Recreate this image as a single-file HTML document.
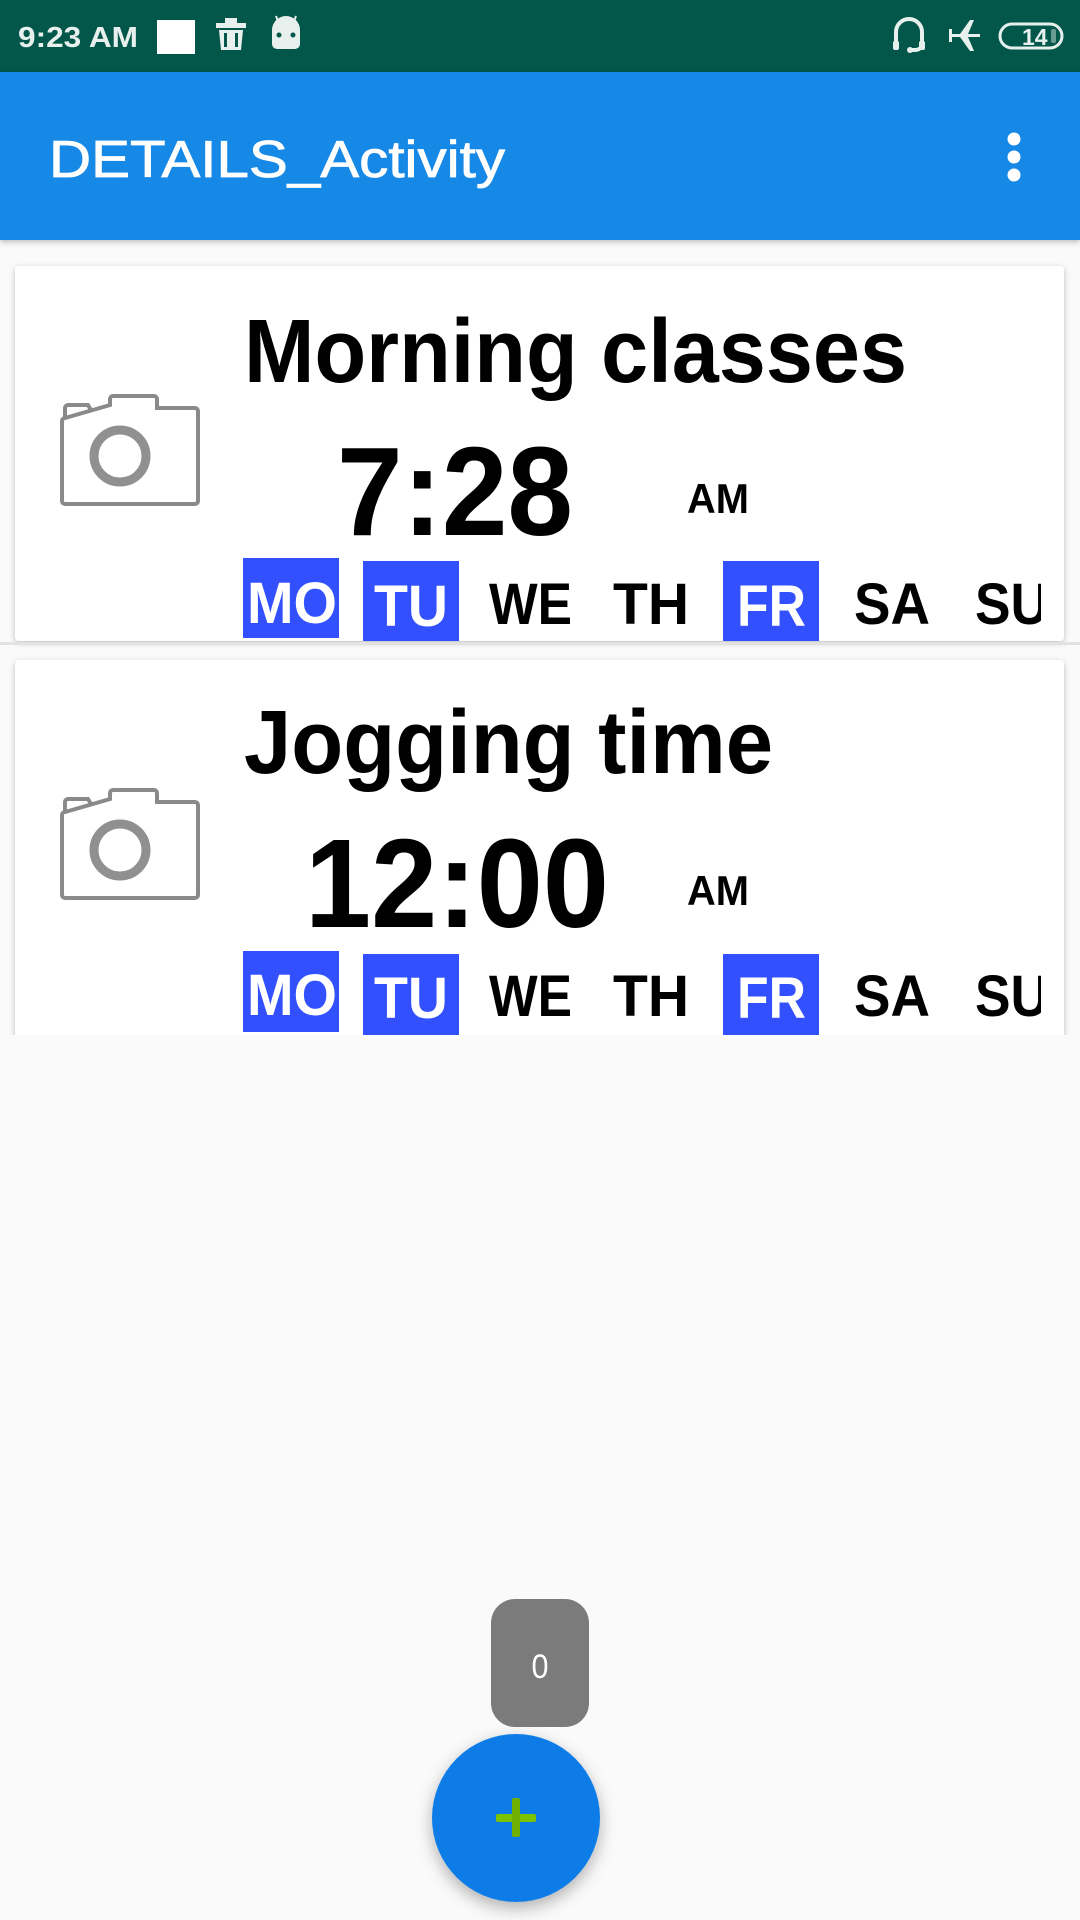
<!DOCTYPE html>
<html><head><meta charset="utf-8"><style>
html,body{margin:0;padding:0;background:#fafafa;width:1080px;height:1920px;overflow:hidden}
svg{display:block}
text{font-family:"Liberation Sans",Arial,sans-serif}
</style></head><body>
<svg width="1080" height="1920" viewBox="0 0 1080 1920" xmlns="http://www.w3.org/2000/svg">
<defs>
<filter id="sh" x="-10%" y="-10%" width="120%" height="130%"><feDropShadow dx="0" dy="2" stdDeviation="3" flood-color="#000" flood-opacity="0.25"/></filter>
<filter id="fsh" x="-30%" y="-30%" width="160%" height="170%"><feDropShadow dx="0" dy="6" stdDeviation="8" flood-color="#000" flood-opacity="0.3"/></filter>
<g id="cam" fill="none" stroke="#8a8a8a" stroke-width="4">
<path d="M62 0 h40 a3 3 0 0 1 3 3 v9 h38 a3 3 0 0 1 3 3 v90 a3 3 0 0 1 -3 3 h-130 a3 3 0 0 1 -3 -3 v-80 a3 3 0 0 1 3 -3 l45 -13 v-6 a3 3 0 0 1 3 -3z"/>
<path d="M13 22 v-10 a3 3 0 0 1 3 -3 h20 l3 5"/>
<circle cx="68" cy="60" r="26" stroke-width="9" stroke="#909090"/>
</g>
</defs>
<rect width="1080" height="1920" fill="#fafafa"/>
<!-- status bar -->
<rect width="1080" height="72" fill="#02574a"/>
<text x="18" y="47" font-size="29" font-weight="bold" fill="#e8f0ee" textLength="120" lengthAdjust="spacingAndGlyphs">9:23 AM</text>
<rect x="157" y="20" width="38" height="34" fill="#fff"/>
<g fill="#e8f0ee">
<rect x="216" y="23" width="30" height="5"/><rect x="225" y="18" width="12" height="6"/>
<path d="M219 30 h24 l-2 20 h-20z"/>
</g>
<rect x="224" y="33" width="3" height="14" fill="#02574a"/><rect x="235" y="33" width="3" height="14" fill="#02574a"/>
<g fill="#e8f0ee"><path d="M272 30 a14 14 0 0 1 28 0 v14 a5 5 0 0 1 -5 5 h-18 a5 5 0 0 1 -5 -5z"/>
<line x1="276" y1="16" x2="279" y2="24" stroke="#e8f0ee" stroke-width="2"/><line x1="296" y1="16" x2="293" y2="24" stroke="#e8f0ee" stroke-width="2"/></g>
<circle cx="279" cy="35" r="2.5" fill="#02574a"/><circle cx="293" cy="35" r="2.5" fill="#02574a"/>
<!-- right icons -->
<g stroke="#e8f0ee" fill="none" stroke-width="4">
<path d="M896 44 v-12 a13 13 0 0 1 26 0 v12"/>
<path d="M920 47 q0 3 -6 3 h-4"/>
</g>
<rect x="893" y="41" width="6" height="9" rx="2" fill="#e8f0ee"/><rect x="919" y="41" width="6" height="9" rx="2" fill="#e8f0ee"/>
<circle cx="910" cy="50" r="3" fill="#e8f0ee"/>
<path transform="translate(1932,0) scale(-1,1)" d="M952 34 h12 l-6 -14 h4 l10 14 h8 v-5 h3 v13 h-3 v-5 h-8 l-10 14 h-4 l6 -14 h-12z" fill="#e8f0ee"/>
<rect x="1000" y="24" width="62" height="24" rx="12" fill="none" stroke="#e8f0ee" stroke-width="3"/>
<text x="1022" y="45" font-size="23" font-weight="bold" fill="#e8f0ee">14</text>
<rect x="1051" y="29" width="5" height="14" rx="2" fill="#6a9c90"/>
<!-- app bar -->
<rect x="0" y="72" width="1080" height="168" fill="#1488e6" filter="url(#sh)"/>
<text x="49" y="177" font-size="52" fill="#fff" stroke="#fff" stroke-width="0.8" textLength="456" lengthAdjust="spacingAndGlyphs">DETAILS_Activity</text>
<circle cx="1014" cy="139" r="6.5" fill="#fff"/><circle cx="1014" cy="157" r="6.5" fill="#fff"/><circle cx="1014" cy="175" r="6.5" fill="#fff"/>
<!-- card 1 -->
<rect x="15" y="266" width="1049" height="375" rx="4" fill="#fff" filter="url(#sh)"/>
<rect x="0" y="642" width="1080" height="3" fill="#e2e2e2"/>
<use href="#cam" transform="translate(52,396)"/>
<text x="244" y="382" font-size="90" font-weight="bold" fill="#000" textLength="663" lengthAdjust="spacingAndGlyphs">Morning classes</text>
<text x="337" y="535" font-size="126" font-weight="bold" fill="#000" textLength="236" lengthAdjust="spacingAndGlyphs">7:28</text>
<text x="687" y="513" font-size="42" font-weight="bold" fill="#000" textLength="62" lengthAdjust="spacingAndGlyphs">AM</text>
<g font-size="58" font-weight="bold">
<rect x="243" y="558" width="96" height="80" fill="#3350ff"/>
<rect x="363" y="561" width="96" height="80" fill="#3350ff"/>
<rect x="723" y="561" width="96" height="80" fill="#3350ff"/>
<text x="247" y="623" fill="#fff" textLength="90" lengthAdjust="spacingAndGlyphs">MO</text>
<text x="374" y="626" fill="#fff" textLength="74" lengthAdjust="spacingAndGlyphs">TU</text>
<text x="489" y="624" fill="#000" textLength="83" lengthAdjust="spacingAndGlyphs">WE</text>
<text x="613" y="624" fill="#000" textLength="76" lengthAdjust="spacingAndGlyphs">TH</text>
<text x="737" y="626" fill="#fff" textLength="69" lengthAdjust="spacingAndGlyphs">FR</text>
<text x="854" y="624" fill="#000" textLength="76" lengthAdjust="spacingAndGlyphs">SA</text>
<svg x="0" y="0" width="1041" height="1920" overflow="hidden"><text x="975" y="624" fill="#000" textLength="74" lengthAdjust="spacingAndGlyphs">SU</text></svg>
</g>
<!-- card 2 -->
<rect x="15" y="660" width="1049" height="390" rx="4" fill="#fff" filter="url(#sh)"/>
<rect x="0" y="1035" width="1080" height="40" fill="#fafafa"/>
<use href="#cam" transform="translate(52,790)"/>
<text x="244" y="773" font-size="90" font-weight="bold" fill="#000" textLength="529" lengthAdjust="spacingAndGlyphs">Jogging time</text>
<text x="305" y="927" font-size="126" font-weight="bold" fill="#000" textLength="304" lengthAdjust="spacingAndGlyphs">12:00</text>
<text x="687" y="905" font-size="42" font-weight="bold" fill="#000" textLength="62" lengthAdjust="spacingAndGlyphs">AM</text>
<g font-size="58" font-weight="bold">
<rect x="243" y="951" width="96" height="81" fill="#3350ff"/>
<rect x="363" y="954" width="96" height="81" fill="#3350ff"/>
<rect x="723" y="954" width="96" height="81" fill="#3350ff"/>
<text x="247" y="1015" fill="#fff" textLength="90" lengthAdjust="spacingAndGlyphs">MO</text>
<text x="374" y="1018" fill="#fff" textLength="74" lengthAdjust="spacingAndGlyphs">TU</text>
<text x="489" y="1016" fill="#000" textLength="83" lengthAdjust="spacingAndGlyphs">WE</text>
<text x="613" y="1016" fill="#000" textLength="76" lengthAdjust="spacingAndGlyphs">TH</text>
<text x="737" y="1018" fill="#fff" textLength="69" lengthAdjust="spacingAndGlyphs">FR</text>
<text x="854" y="1016" fill="#000" textLength="76" lengthAdjust="spacingAndGlyphs">SA</text>
<svg x="0" y="0" width="1041" height="1920" overflow="hidden"><text x="975" y="1016" fill="#000" textLength="74" lengthAdjust="spacingAndGlyphs">SU</text></svg>
</g>
<!-- toast -->
<rect x="491" y="1599" width="98" height="128" rx="24" fill="#7b7b7b"/>
<text x="540" y="1678" font-size="34" fill="#fff" text-anchor="middle" textLength="17" lengthAdjust="spacingAndGlyphs">0</text>
<!-- fab -->
<circle cx="516" cy="1818" r="84" fill="#117ce6" filter="url(#fsh)"/>
<rect x="496" y="1814" width="40" height="8" rx="2" fill="#7cc200"/>
<rect x="512" y="1798" width="8" height="39" rx="2" fill="#6fb000"/>
</svg>
</body></html>
